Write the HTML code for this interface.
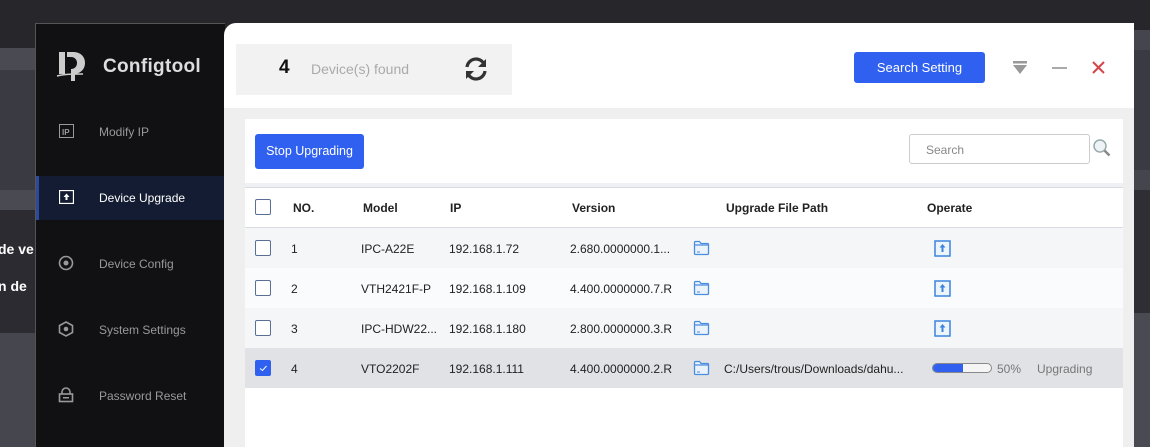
<!DOCTYPE html>
<html><head><meta charset="utf-8"><style>
*{margin:0;padding:0;box-sizing:border-box}
body{width:1150px;height:447px;overflow:hidden;position:relative;background:#26262b;font-family:"Liberation Sans",sans-serif;font-size:12px;color:#222}
.a{position:absolute}
.t{position:absolute;white-space:nowrap}
.cb{position:absolute;width:16px;height:16px;border:1px solid #5a6f95;border-radius:2px;background:#fff}
.fold{position:absolute;width:17px;height:16px}
</style></head><body>
<!-- background strips -->
<div class="a" style="left:0;top:48px;width:36px;height:22px;background:#4a4a52"></div>
<div class="a" style="left:0;top:70px;width:36px;height:120px;background:#3a3a42"></div>
<div class="a" style="left:0;top:190px;width:36px;height:20px;background:#4a4a52"></div>
<div class="a" style="left:0;top:210px;width:36px;height:123px;background:#2b2b31"></div>
<div class="a" style="left:0;top:333px;width:36px;height:114px;background:#46464e"></div>
<div class="t" style="left:-2px;top:241px;color:#fff;font-weight:bold;font-size:14px">de ve</div>
<div class="t" style="left:-2px;top:278px;color:#fff;font-weight:bold;font-size:14px">n de</div>
<div class="a" style="left:1134px;top:30px;width:16px;height:20px;background:#45454d"></div>
<div class="a" style="left:1134px;top:50px;width:16px;height:120px;background:#3a3a42"></div>
<div class="a" style="left:1134px;top:170px;width:16px;height:20px;background:#45454d"></div>
<div class="a" style="left:1134px;top:190px;width:16px;height:123px;background:#2e2e34"></div>
<div class="a" style="left:1134px;top:313px;width:16px;height:134px;background:#4a4a52"></div>
<!-- sidebar -->
<div class="a" style="left:35px;top:23px;width:190px;height:424px;background:#111113;border-left:1px solid #555;border-top:1px solid #555"></div>
<svg class="a" style="left:56px;top:50px" width="36" height="34" viewBox="0 0 36 34"><path d="M3 2h6v22H3zM11 2h6c8 0 12 5 12 11s-4 10-10 11v7h-4V19c4 0 6-3 6-6s-2-6-6-6h-4z" fill="#ccc"/><path d="M1 26c8-2 16-2 26-2" stroke="#ccc" stroke-width="1.5" fill="none"/></svg>
<div class="t" style="left:103px;top:56px;color:#ddd;font-size:19px;font-weight:bold;letter-spacing:0.3px">Configtool</div>
<svg class="a" style="left:59px;top:124px" width="15" height="14"><rect x="0.5" y="0.5" width="14" height="13" fill="none" stroke="#999"/><text x="3" y="11" font-size="8" font-family="Liberation Sans" fill="#999" font-weight="bold">IP</text></svg>
<div class="t" style="left:99px;top:125px;color:#999">Modify IP</div>
<div class="a" style="left:36px;top:176px;width:189px;height:44px;background:#141c33;border-left:3px solid #2d4a9a"></div>
<svg class="a" style="left:59px;top:190px" width="15" height="14"><rect x="0.5" y="0.5" width="14" height="13" fill="none" stroke="#fff" stroke-width="1.3"/><path d="M7.5 3.5l-3 3.5h2v3h2V7h2z" fill="#fff"/></svg>
<div class="t" style="left:99px;top:191px;color:#fff">Device Upgrade</div>
<svg class="a" style="left:58px;top:255px" width="16" height="16"><circle cx="8" cy="8" r="6.5" fill="none" stroke="#999" stroke-width="1.6"/><circle cx="8" cy="8" r="2.5" fill="#999"/></svg>
<div class="t" style="left:99px;top:257px;color:#999">Device Config</div>
<svg class="a" style="left:58px;top:321px" width="16" height="16"><path d="M8 1l6.5 3.5v7L8 15 1.5 11.5v-7z" fill="none" stroke="#999" stroke-width="1.6"/><circle cx="8" cy="8" r="2.3" fill="#999"/></svg>
<div class="t" style="left:99px;top:323px;color:#999">System Settings</div>
<svg class="a" style="left:58px;top:387px" width="16" height="16"><path d="M4 7V5a4 4 0 018 0v2" fill="none" stroke="#999" stroke-width="1.6"/><rect x="1.5" y="7" width="13" height="7.5" fill="none" stroke="#999" stroke-width="1.6"/><rect x="5" y="10" width="6" height="1.5" fill="#999"/></svg>
<div class="t" style="left:99px;top:389px;color:#999">Password Reset</div>
<!-- main panel -->
<div class="a" style="left:224px;top:23px;width:910px;height:424px;background:#fff;border-top-left-radius:12px"></div>
<div class="a" style="left:236px;top:44px;width:276px;height:51px;background:#f2f2f2"></div>
<div class="t" style="left:279px;top:57px;font-size:19px;font-weight:bold;color:#111">4</div>
<div class="t" style="left:311px;top:61px;font-size:14px;color:#aaa">Device(s) found</div>
<svg class="a" style="left:463px;top:56px" width="26" height="26" viewBox="0 0 26 26"><path d="M4 11a9 9 0 0117-3" fill="none" stroke="#333" stroke-width="3.2"/><path d="M22 15a9 9 0 01-17 3" fill="none" stroke="#333" stroke-width="3.2"/><path d="M23 3v8h-8z" fill="#333"/><path d="M3 23v-8h8z" fill="#333"/></svg>
<div class="a" style="left:854px;top:52px;width:131px;height:31px;background:#2f60f0;border-radius:3px;color:#fff;font-size:13px;text-align:center;line-height:31px">Search Setting</div>
<svg class="a" style="left:1012px;top:61px" width="16" height="14"><rect x="1" y="0" width="14" height="2.5" fill="#999"/><path d="M1 4h14l-7 9z" fill="#999"/></svg>
<div class="a" style="left:1052px;top:67px;width:15px;height:2px;background:#aaa"></div>
<svg class="a" style="left:1092px;top:61px" width="13" height="13"><path d="M1 1l11 11M12 1L1 12" stroke="#d9434a" stroke-width="2"/></svg>
<div class="a" style="left:224px;top:108px;width:910px;height:339px;background:#efefef"></div>
<div class="a" style="left:245px;top:119px;width:878px;height:328px;background:#fff"></div>
<div class="a" style="left:255px;top:134px;width:109px;height:35px;background:#2f60f0;border-radius:3px;color:#fff;font-size:12.5px;text-align:center;line-height:35px">Stop Upgrading</div>
<div class="a" style="left:909px;top:134px;width:181px;height:30px;border:1px solid #ccc;border-radius:3px"></div>
<div class="t" style="left:926px;top:143px;color:#888">Search</div>
<svg class="a" style="left:1092px;top:138px" width="20" height="20"><circle cx="8" cy="8" r="6" fill="#eef3f8" stroke="#9aa" stroke-width="1.5"/><path d="M12.5 12.5l5 5" stroke="#888" stroke-width="2.5"/></svg>
<div class="a" style="left:245px;top:183px;width:878px;height:4px;background:#eef0f3"></div>
<div class="a" style="left:245px;top:187px;width:878px;height:1px;background:#d8dbe0"></div>
<div class="a" style="left:245px;top:227px;width:878px;height:1px;background:#d8dbe0"></div>
<div class="cb" style="left:255px;top:199px"></div>
<div class="t" style="left:293px;top:201px;font-weight:bold">NO.</div>
<div class="t" style="left:363px;top:201px;font-weight:bold">Model</div>
<div class="t" style="left:450px;top:201px;font-weight:bold">IP</div>
<div class="t" style="left:572px;top:201px;font-weight:bold">Version</div>
<div class="t" style="left:726px;top:201px;font-weight:bold">Upgrade File Path</div>
<div class="t" style="left:927px;top:201px;font-weight:bold">Operate</div>
<!-- rows -->
<div class="a" style="left:245px;top:228px;width:878px;height:40px;background:#f5f6f8"></div>
<div class="a" style="left:245px;top:268px;width:878px;height:40px;background:#fafbfc"></div>
<div class="a" style="left:245px;top:308px;width:878px;height:40px;background:#f5f6f8"></div>
<div class="a" style="left:245px;top:348px;width:878px;height:40px;background:#e1e2e6"></div>
<div class="cb" style="left:255px;top:240px"></div>
<div class="cb" style="left:255px;top:280px"></div>
<div class="cb" style="left:255px;top:320px"></div>
<div class="cb" style="left:255px;top:360px;background:#2f60f0;border-color:#2f60f0"><svg width="14" height="14" style="position:absolute;left:0;top:0"><path d="M4 7.5l2.5 2L10.5 5" stroke="#fff" stroke-width="1" fill="none"/></svg></div>
<div class="t" style="left:291px;top:242px">1</div><div class="t" style="left:361px;top:242px">IPC-A22E</div><div class="t" style="left:449px;top:242px">192.168.1.72</div><div class="t" style="left:570px;top:242px">2.680.0000000.1...</div>
<div class="t" style="left:291px;top:282px">2</div><div class="t" style="left:361px;top:282px">VTH2421F-P</div><div class="t" style="left:449px;top:282px">192.168.1.109</div><div class="t" style="left:570px;top:282px">4.400.0000000.7.R</div>
<div class="t" style="left:291px;top:322px">3</div><div class="t" style="left:361px;top:322px">IPC-HDW22...</div><div class="t" style="left:449px;top:322px">192.168.1.180</div><div class="t" style="left:570px;top:322px">2.800.0000000.3.R</div>
<div class="t" style="left:291px;top:362px">4</div><div class="t" style="left:361px;top:362px">VTO2202F</div><div class="t" style="left:449px;top:362px">192.168.1.111</div><div class="t" style="left:570px;top:362px">4.400.0000000.2.R</div>
<svg class="fold" style="left:693px;top:240px" viewBox="0 0 17 16"><path d="M1.5 2.5a1 1 0 011-1h4l1.5 2h6.5a1 1 0 011 1v9a1 1 0 01-1 1h-12a1 1 0 01-1-1z M1.5 5h14" fill="#eaf2fc" stroke="#4a8ee0" stroke-width="1.3"/><path d="M4 12h3" stroke="#4a8ee0"/></svg>
<svg class="fold" style="left:693px;top:280px" viewBox="0 0 17 16"><path d="M1.5 2.5a1 1 0 011-1h4l1.5 2h6.5a1 1 0 011 1v9a1 1 0 01-1 1h-12a1 1 0 01-1-1z M1.5 5h14" fill="#eaf2fc" stroke="#4a8ee0" stroke-width="1.3"/><path d="M4 12h3" stroke="#4a8ee0"/></svg>
<svg class="fold" style="left:693px;top:320px" viewBox="0 0 17 16"><path d="M1.5 2.5a1 1 0 011-1h4l1.5 2h6.5a1 1 0 011 1v9a1 1 0 01-1 1h-12a1 1 0 01-1-1z M1.5 5h14" fill="#eaf2fc" stroke="#4a8ee0" stroke-width="1.3"/><path d="M4 12h3" stroke="#4a8ee0"/></svg>
<svg class="fold" style="left:693px;top:360px" viewBox="0 0 17 16"><path d="M1.5 2.5a1 1 0 011-1h4l1.5 2h6.5a1 1 0 011 1v9a1 1 0 01-1 1h-12a1 1 0 01-1-1z M1.5 5h14" fill="#eaf2fc" stroke="#4a8ee0" stroke-width="1.3"/><path d="M4 12h3" stroke="#4a8ee0"/></svg>
<div class="t" style="left:724px;top:362px">C:/Users/trous/Downloads/dahu...</div>
<svg class="a" style="left:934px;top:240px" width="17" height="17"><rect x="1" y="1" width="15" height="15" fill="#eef4fc" stroke="#3a84dc" stroke-width="1.5"/><path d="M8.5 4l-3 3.5h2v4.5h2V7.5h2z" fill="#3a84dc"/></svg>
<svg class="a" style="left:934px;top:280px" width="17" height="17"><rect x="1" y="1" width="15" height="15" fill="#eef4fc" stroke="#3a84dc" stroke-width="1.5"/><path d="M8.5 4l-3 3.5h2v4.5h2V7.5h2z" fill="#3a84dc"/></svg>
<svg class="a" style="left:934px;top:320px" width="17" height="17"><rect x="1" y="1" width="15" height="15" fill="#eef4fc" stroke="#3a84dc" stroke-width="1.5"/><path d="M8.5 4l-3 3.5h2v4.5h2V7.5h2z" fill="#3a84dc"/></svg>
<div class="a" style="left:932px;top:363px;width:60px;height:10px;border:1px solid #888;border-radius:5px;background:#f5f5f5;overflow:hidden"><div style="width:30px;height:100%;background:#2f60f0"></div></div>
<div class="t" style="left:997px;top:362px;color:#777">50%</div>
<div class="t" style="left:1037px;top:362px;color:#777">Upgrading</div>
</body></html>
